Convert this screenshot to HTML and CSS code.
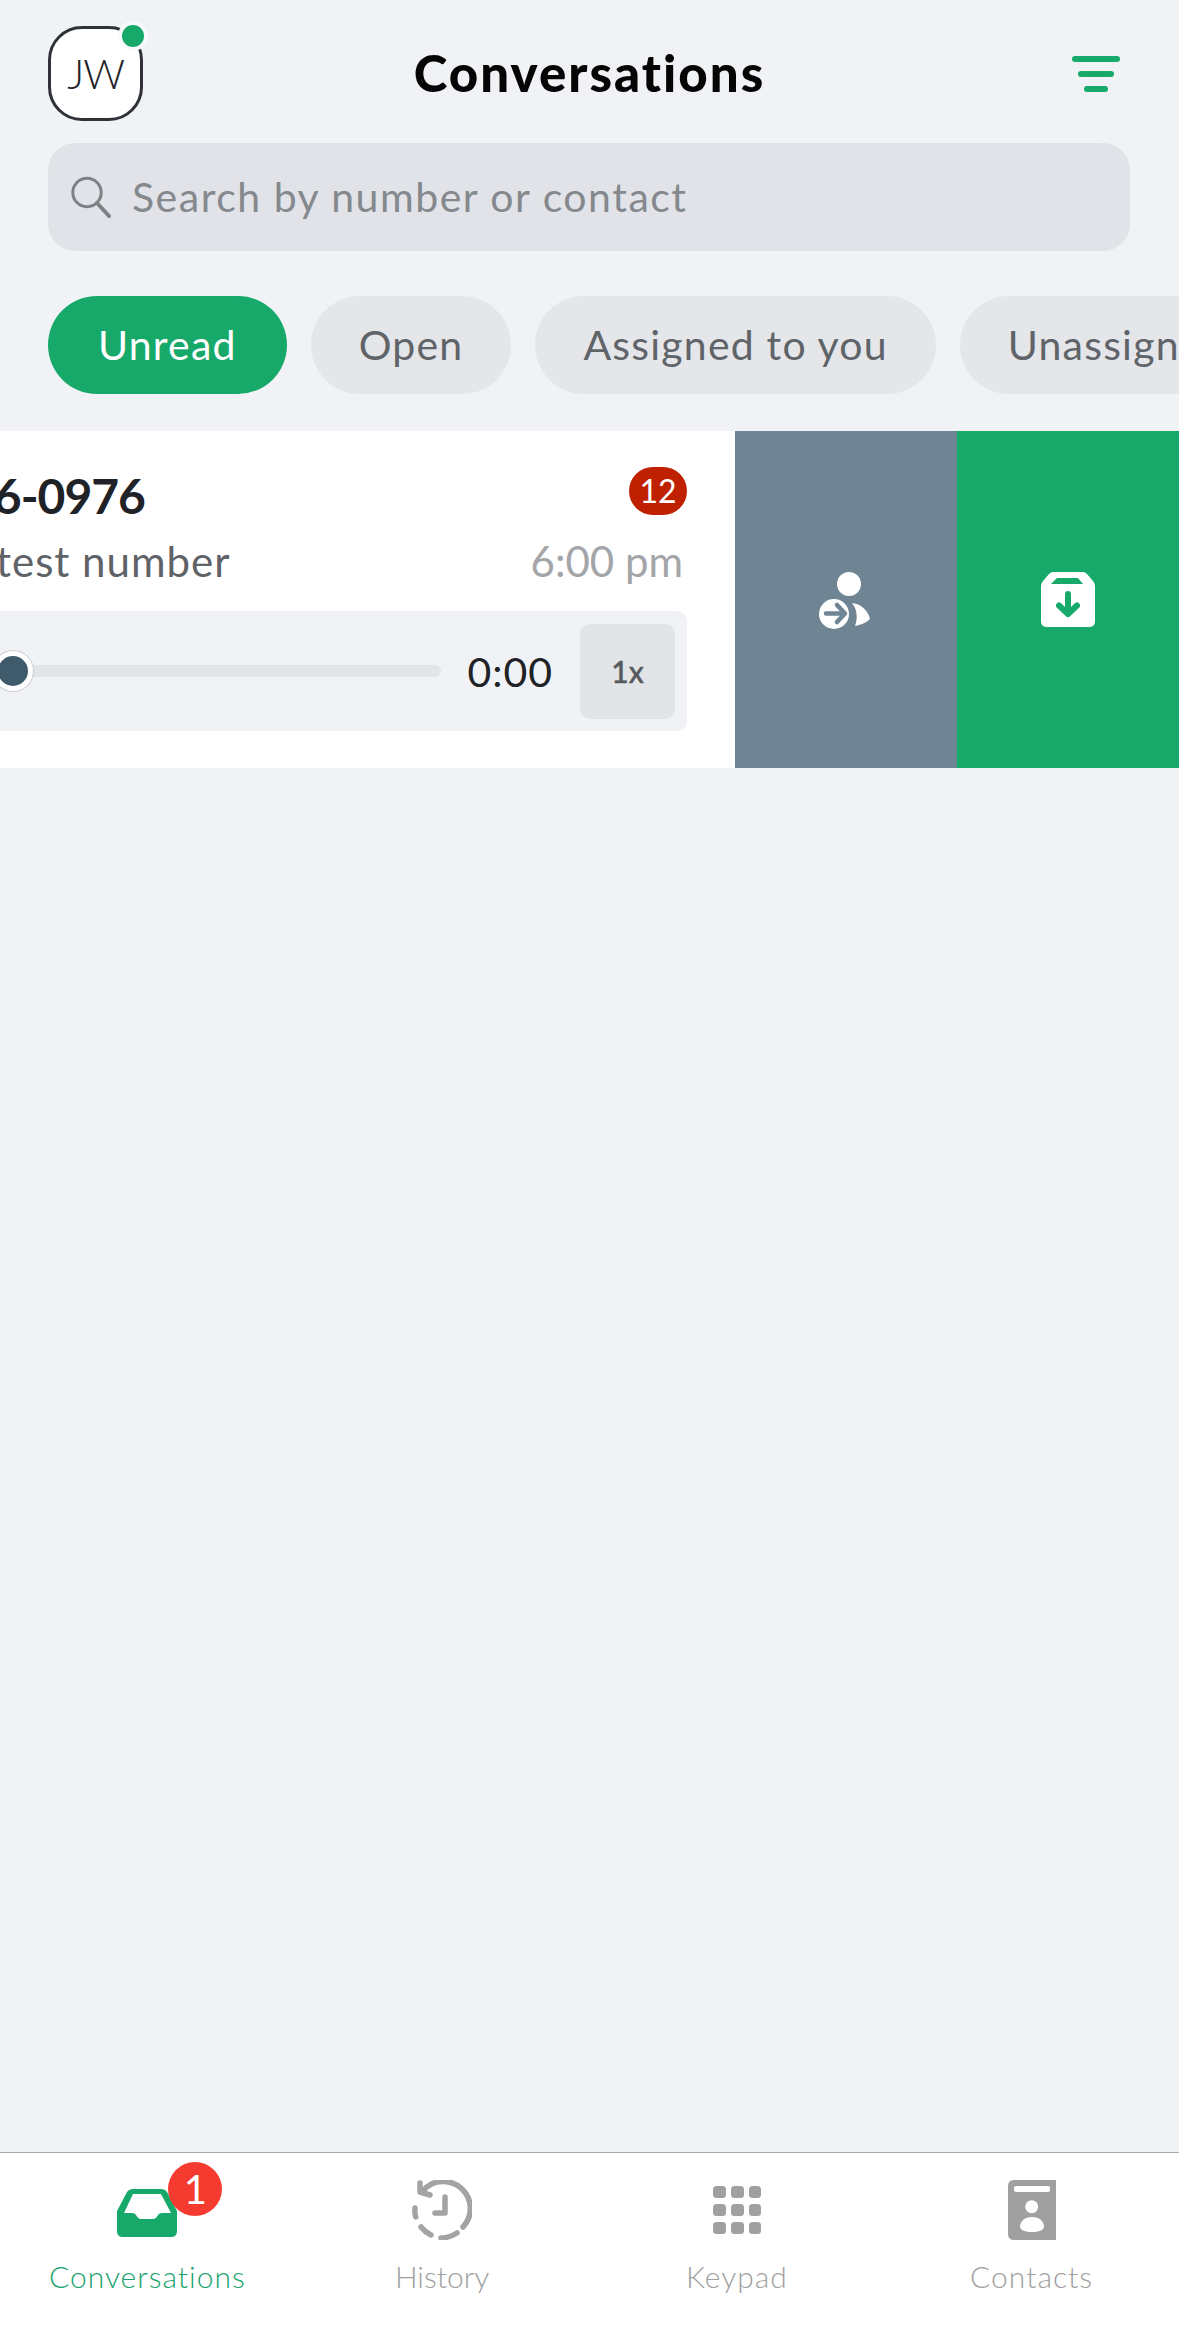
FILE: index.html
```html
<!DOCTYPE html>
<html lang="en">
<head>
<meta charset="utf-8">
<title>Conversations</title>
<link rel="stylesheet" href="styles.css">
</head>
<body>
<div class="app">
  <header class="topbar">
    <div class="avatar"><span>JW</span><i class="presence"></i></div>
    <h1 class="title">Conversations</h1>
    <div class="filter" aria-label="Filter"><i class="fl fl1"></i><i class="fl fl2"></i><i class="fl fl3"></i></div>
  </header>

  <div class="search">
    <svg class="search-icon" viewBox="0 0 42 42"><circle cx="17" cy="16.5" r="14.2" fill="none" stroke="#7d8085" stroke-width="3"/><path d="M27 27 L39 40" fill="none" stroke="#7d8085" stroke-width="4" stroke-linecap="round"/></svg>
    <span class="search-text">Search by number or contact</span>
  </div>

  <nav class="pills">
    <span class="pill pill-on">Unread</span>
    <span class="pill">Open</span>
    <span class="pill">Assigned to you</span>
    <span class="pill">Unassigned</span>
  </nav>

  <section class="swipe">
    <div class="card">
      <div class="line1"><span class="number">26-0976</span><span class="count">12</span></div>
      <div class="line2"><span class="note">test number</span><span class="when">6:00 pm</span></div>
      <div class="player">
        <div class="track"><i class="thumb"></i></div>
        <span class="dur">0:00</span>
        <span class="speed">1x</span>
      </div>
    </div>
    <div class="action action-assign">
      <svg class="assign-icon" viewBox="0 0 60 62">
        <circle cx="30" cy="15" r="12" fill="#fff"/>
        <circle cx="15" cy="45" r="15" fill="#fff"/>
        <path d="M7 44.5 H24 M18 36 L26 44.5 L18 53" fill="none" stroke="#6f8593" stroke-width="4.5" stroke-linecap="round" stroke-linejoin="round"/>
        <path d="M33 34 C43 35 49 42 51 50 C47 54 41 56 36 57 C39 49 38 40 33 34Z" fill="#fff"/>
      </svg>
    </div>
    <div class="action action-archive">
      <svg class="archive-icon" viewBox="0 0 54 55">
        <path d="M12 0 H42 Q44 0 46 2 L52 9 Q54 11 54 14 V49 Q54 55 48 55 H6 Q0 55 0 49 V14 Q0 11 2 9 L8 2 Q10 0 12 0Z" fill="#fff"/>
        <path d="M16 6 H37 L42 12 H10Z" fill="#16a96a"/>
        <path d="M27 22 V40 M18 33.5 L27 42 L36 33.5" fill="none" stroke="#16a96a" stroke-width="6" stroke-linecap="round" stroke-linejoin="round"/>
      </svg>
    </div>
  </section>

  <div class="spacer"></div>

  <footer class="tabs">
    <div class="tab tab-on">
      <div class="tab-icon">
        <svg class="ico-inbox" viewBox="0 0 60 48"><path fill-rule="evenodd" d="M16 0 H44 Q48 0 50 3 L60 22 V42 Q60 48 54 48 H6 Q0 48 0 42 V22 L10 3 Q12 0 16 0Z M16 5 L7 24 H15 Q18 24 19 26 Q21 30 24 30 H36 Q39 30 41 26 Q42 24 45 24 H54 L44 5Z" fill="#16a96a"/></svg>
        <span class="tab-badge">1</span>
      </div>
      <span class="tab-label">Conversations</span>
    </div>
    <div class="tab">
      <div class="tab-icon">
        <svg class="ico-history" viewBox="0 0 60 60"><g fill="none" stroke="#a3a3a3" stroke-width="5.5" stroke-linecap="round" stroke-linejoin="round"><path d="M11.5 10 A27 27 0 0 1 51 47"/><path d="M8 3 L8 12 L18 15"/><path d="M33 17 V33 H23"/><path d="M3 28 Q2.5 33 3.8 37"/><path d="M9 47 Q13 52 19 55"/><path d="M29 58 Q37 58 45 53"/></g></svg>
      </div>
      <span class="tab-label tab-label-tight">History</span>
    </div>
    <div class="tab">
      <div class="tab-icon">
        <svg class="ico-keypad" viewBox="0 0 48 48" fill="#a0a0a0">
          <rect x="0" y="0" width="13" height="12" rx="3.5"/><rect x="18" y="0" width="13" height="12" rx="3.5"/><rect x="36" y="0" width="12" height="12" rx="3.5"/>
          <rect x="0" y="18" width="13" height="12" rx="3.5"/><rect x="18" y="18" width="13" height="12" rx="3.5"/><rect x="36" y="18" width="12" height="12" rx="3.5"/>
          <rect x="0" y="36" width="13" height="12" rx="3.5"/><rect x="18" y="36" width="13" height="12" rx="3.5"/><rect x="36" y="36" width="12" height="12" rx="3.5"/>
        </svg>
      </div>
      <span class="tab-label">Keypad</span>
    </div>
    <div class="tab">
      <div class="tab-icon">
        <svg class="ico-contacts" viewBox="0 0 48 60">
          <path d="M6 0 H48 V60 H6 Q0 60 0 54 V6 Q0 0 6 0Z" fill="#a0a0a0"/>
          <rect x="6" y="6" width="36" height="6" rx="2" fill="#fff"/>
          <circle cx="23.7" cy="26.7" r="6.5" fill="#fff"/>
          <path d="M12 47 C12 41 17 37 24 37 C31 37 36 41 36 47 C36 50 30 52 24 52 C18 52 12 50 12 47Z" fill="#fff"/>
        </svg>
      </div>
      <span class="tab-label">Contacts</span>
    </div>
  </footer>
</div>
</body>
</html>
```

FILE: styles.css
```css
* { box-sizing: border-box; }
html, body { margin: 0; padding: 0; height: 100%; }
body { font-family: "Lato", "Open Sans", sans-serif; background: #f0f2f6; overflow: hidden; }
.app { height: 2327px; width: 1179px; display: flex; flex-direction: column; overflow: hidden; }

.topbar { display: grid; grid-template-columns: 1fr auto 1fr; align-items: center; padding: 26px 48px 0; }
.avatar { position: relative; width: 95px; height: 95px; background: #fff; border: 3px solid #2e3135; border-radius: 34px; display: flex; align-items: center; justify-content: center; font-size: 41px; font-weight: 300; color: #1f2226; letter-spacing: -1px; }
.presence { position: absolute; top: -8px; right: -8px; width: 30px; height: 30px; background: #16a96a; border: 4px solid #f8f9fb; border-radius: 50%; }
.title { margin: 0; font-size: 51px; font-weight: 900; color: #050505; line-height: 60px; letter-spacing: 2px; position: relative; top: -1px; }
.filter { justify-self: end; display: flex; flex-direction: column; align-items: center; gap: 9px; width: 48px; margin-right: 11px; }
.fl { display: block; height: 6px; border-radius: 3px; background: #16a96a; }
.fl1 { width: 48px; } .fl2 { width: 36px; } .fl3 { width: 24px; }

.search { margin: 22px 49px 0 48px; height: 108px; background: #e1e3e8; border-radius: 27px; display: flex; align-items: center; padding-left: 22px; gap: 20px; }
.search-icon { width: 42px; height: 42px; flex: none; }
.search-text { font-size: 41px; color: #85888d; font-weight: 400; letter-spacing: 1.5px; position: relative; top: -1px; }

.pills { display: flex; gap: 24px; padding-left: 48px; margin-top: 45px; overflow: hidden; }
.pill { flex: none; height: 98px; line-height: 98px; padding: 0 48px; border-radius: 49px; background: #e4e6ea; font-size: 41px; color: #606368; letter-spacing: 1.2px; }
.pill-on { background: #16a96a; color: #fff; padding: 0 50px; }

.swipe { display: flex; margin-top: 37px; height: 337px; }
.card { width: 735px; flex: none; background: #fff; overflow: hidden; padding: 36px 48px 0 0; }
.line1 { display: flex; justify-content: space-between; align-items: flex-start; height: 48px; }
.number { font-size: 48px; font-weight: 700; color: #1f2226; line-height: 58px; letter-spacing: -1px; margin-left: -33px; }
.count { width: 58px; height: 48px; line-height: 48px; text-align: center; border-radius: 24px; background: #bf2000; color: #fff; font-size: 32px; }
.line2 { display: flex; justify-content: space-between; margin-top: 19px; padding-right: 4px; line-height: 54px; font-size: 42px; }
.note { color: #5f6368; margin-left: -4px; letter-spacing: 1px; }
.when { color: #a3a5a8; }
.player { display: flex; align-items: center; height: 120px; margin: 23px 0 0 -20px; padding-right: 12px; background: #f0f2f6; border-radius: 0 10px 10px 0; }
.track { position: relative; flex: 1; height: 12px; border-radius: 6px; background: #e2e4e8; }
.thumb { position: absolute; left: 13px; top: -14px; width: 40px; height: 40px; border-radius: 50%; background: #3e5a6b; border: 5px solid #fff; box-shadow: 0 0 0 1px #c8ccd0; }
.dur { margin: 0 27px 0 26px; font-size: 41px; color: #1f2226; letter-spacing: 1px; }
.speed { width: 95px; height: 95px; line-height: 95px; text-align: center; border-radius: 10px; background: #e2e4e8; font-size: 30px; color: #55585c; font-weight: 500; -webkit-text-stroke: 0.4px #55585c; }

.action { display: flex; align-items: center; justify-content: center; flex: none; height: 337px; }
.action-assign { width: 222px; background: #6f8593; }
.action-archive { width: 222px; background: #16a96a; }
.assign-icon { width: 60px; height: 62px; margin-left: 6px; }
.archive-icon { width: 54px; height: 55px; }

.spacer { flex: 1; }

.tabs { height: 175px; background: #fff; border-top: 1.5px solid #aaa; display: grid; grid-template-columns: repeat(4, 1fr); }
.tab { display: flex; flex-direction: column; align-items: center; padding-top: 27px; color: #a0a0a0; }
.tab-on { color: #1aa36d; }
.tab-icon { position: relative; height: 60px; display: flex; align-items: center; justify-content: center; }
.tab-label { font-size: 30px; line-height: 36px; margin-top: 18px; font-weight: 300; letter-spacing: 1px; }
.tab-label-tight { letter-spacing: 0; }
.ico-inbox { width: 60px; height: 48px; margin-top: 6px; }
.ico-history { width: 60px; height: 60px; }
.ico-keypad { width: 48px; height: 48px; }
.ico-contacts { width: 48px; height: 60px; }
.tab-badge { position: absolute; left: 51px; top: -18px; width: 54px; height: 54px; line-height: 54px; border-radius: 50%; background: #f53b30; color: #fff; text-align: center; font-size: 40px; font-weight: 400; }
```
